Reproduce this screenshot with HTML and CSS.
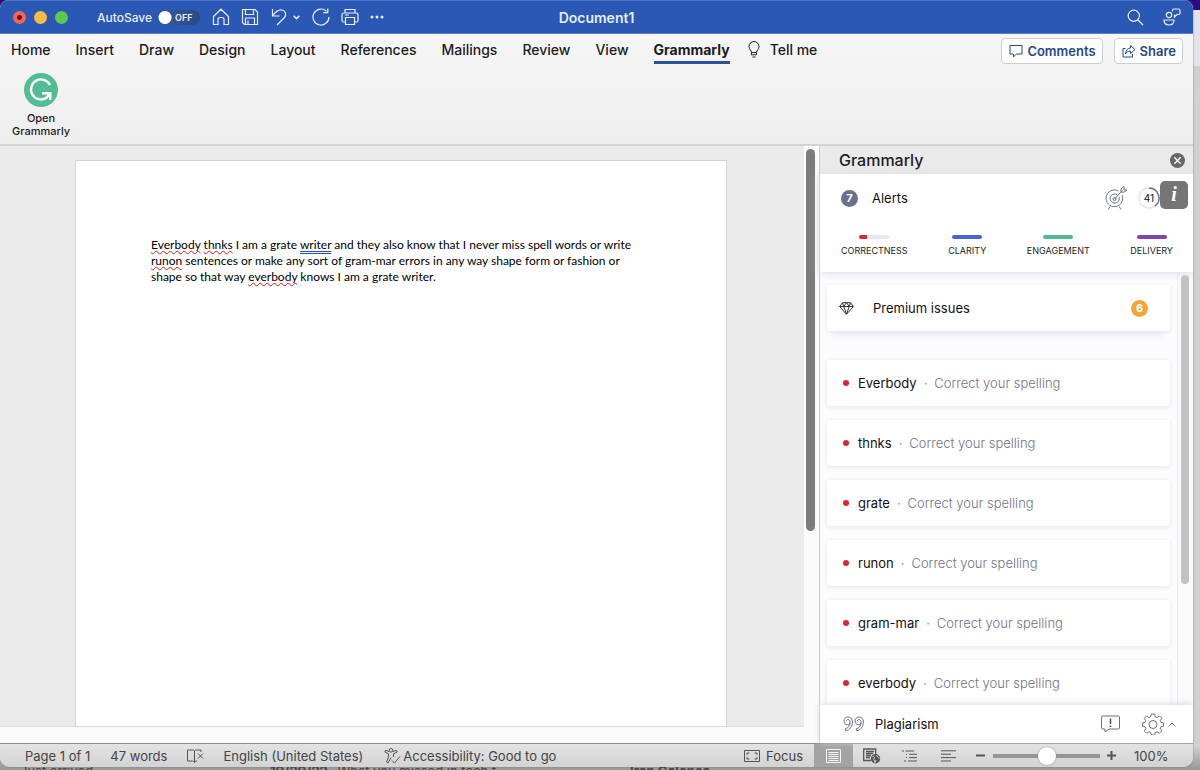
FILE: index.html
```html
<!DOCTYPE html>
<html lang="en">
<head>
<meta charset="utf-8">
<title>Document1</title>
<link rel="stylesheet" href="styles.css">
</head>
<body>
<div class="window">
  <header class="titlebar">
    <div class="lights">
      <button class="light light-close" aria-label="Close window"></button>
      <button class="light light-min" aria-label="Minimize"></button>
      <button class="light light-max" aria-label="Zoom"></button>
    </div>
    <label class="autosave" for="autosave">AutoSave
      <span class="switch"><input type="checkbox" id="autosave"><span class="switch-text">OFF</span></span>
    </label>
    <div class="quick">
      <button class="icon-btn" aria-label="Home"><svg width="18" height="18" viewBox="0 0 18 18"><path d="M1.500 8.500 9 1.200l7.500 7.300V16.500h-4.500v-5.500c0-2-6-2-6 0v5.500H1.500z"/></svg></button>
      <button class="icon-btn" aria-label="Save"><svg width="18" height="18" viewBox="0 0 18 18"><path d="M1.500 1.500h12.500l2.500 2.500v12.500h-13l-2-2zM4.500 1.500v5h8v-5M4.500 16.500v-6.500h9v6.500M7 12.500v4"/></svg></button>
      <button class="icon-btn undo" aria-label="Undo"><svg width="17" height="18" viewBox="0 0 17 18"><path d="M2.500 1v7h7M2.500 8C6 3 9 1.500 12 2c4 .8 4.500 5 2.500 7.500L7 17"/></svg><svg class="caret" width="7" height="5" viewBox="0 0 7 5"><path d="m.7.700 2.800 3L6.300.700"/></svg></button>
      <button class="icon-btn" aria-label="Redo"><svg width="19" height="18" viewBox="0 0 19 18"><path d="M15.500 3.200A8 8 0 1 0 18 9M16.800.500v4.200h-4.500"/></svg></button>
      <button class="icon-btn" aria-label="Print"><svg width="18" height="18" viewBox="0 0 18 18"><path d="M4 5V1.500h10V5M4 14H2.500c-1 0-1.500-.5-1.500-1.500V7c0-1 .7-2 2-2h12c1.300 0 2 1 2 2v5.500c0 1-.5 1.500-1.500 1.500H14M4.500 9.500h9v7h-9zM4 7h4"/></svg></button>
      <button class="icon-btn" aria-label="More"><svg width="14" height="4" viewBox="0 0 14 4"><g fill="#e8eefb" stroke="none"><circle cx="2" cy="2" r="1.500"/><circle cx="7" cy="2" r="1.500"/><circle cx="12" cy="2" r="1.500"/></g></svg></button>
    </div>
    <h1 class="doc-title">Document1</h1>
    <div class="title-tools">
      <button class="icon-btn" aria-label="Search"><svg width="17" height="17" viewBox="0 0 17 17"><circle cx="6.800" cy="6.800" r="5.600"/><path d="m11 11 5 5"/></svg></button>
      <button class="icon-btn" aria-label="Collaborate"><svg width="18" height="18" viewBox="0 0 18 18"><circle cx="6" cy="7" r="2.700"/><path d="M1 12h10c0 3.200-2 5-5 5s-5-1.800-5-5zM9.500 3.500V2.500c0-1 .5-1.500 1.500-1.500h4.500c1 0 1.500.500 1.500 1.500v2.500c0 1-.5 1.500-1.500 1.500H14l-2.500 2.500V6.500"/></svg></button>
    </div>
  </header>

  <section class="ribbon">
    <div class="tabs-row">
      <nav class="tabs">
        <button class="tab">Home</button>
        <button class="tab">Insert</button>
        <button class="tab">Draw</button>
        <button class="tab">Design</button>
        <button class="tab">Layout</button>
        <button class="tab">References</button>
        <button class="tab">Mailings</button>
        <button class="tab">Review</button>
        <button class="tab">View</button>
        <button class="tab tab-active">Grammarly</button>
      </nav>
      <button class="tab tell"><svg width="12" height="17" viewBox="0 0 12 17"><path d="M3.500 11.500C3.500 9.500 1 8.500 1 5.500a5 5 0 0 1 10 0c0 3-2.500 4-2.500 6zM3.500 13.800h5M4.500 16h3M3.500 11.500v2.300m5-2.300v2.300"/></svg>Tell me</button>
      <div class="actions">
        <button class="action"><svg width="14" height="14" viewBox="0 0 14 14"><path d="M1 1.500h12v8.500H7.500L4.500 13v-3H1z"/></svg>Comments</button>
        <button class="action"><svg width="14" height="14" viewBox="0 0 14 14"><path d="M3.500 4.500H1v8.500h9.500v-3M8.500 1.500l4.500 4-4.500 4V7C6 7 4.500 8 3.500 10 3.700 6.500 5.500 4.200 8.500 4z"/></svg>Share</button>
      </div>
    </div>
    <button class="open-grammarly">
      <svg width="34" height="34" viewBox="0 0 34 34" fill="none" stroke="#fff" stroke-width="2.400"><circle cx="17" cy="17" r="17" fill="#52bd95" stroke="none"/><path d="M26 12A10 10 0 1 0 22.500 24.800L26 20.500"/><path d="M18 20.300h8.300v6.700"/></svg>
      <span>Open<br>Grammarly</span>
    </button>
  </section>

  <main class="workspace">
    <section class="editor">
      <div class="canvas">
        <article class="page">
          <p><span class="misspelt">Everbody</span> <span class="misspelt">thnks</span> I am a grate <span class="grammar">writer</span> and they also know that I never miss spell words or write <span class="misspelt">runon</span> sentences or make any sort of gram-mar errors in any way shape form or fashion or shape so that way <span class="misspelt">everbody</span> knows I am a grate writer.</p>
        </article>
      </div>
      <div class="editor-scroll"><div class="editor-thumb"></div></div>
    </section>

    <aside class="pane">
      <header class="pane-head">
        <h2>Grammarly</h2>
        <button class="pane-close" aria-label="Close pane"><svg width="15" height="15" viewBox="0 0 15 15"><circle cx="7.500" cy="7.500" r="7.500" fill="#666"/><path d="m4.300 4.300 6.400 6.400m0-6.400-6.400 6.400" stroke="#fff" stroke-width="1.400"/></svg></button>
      </header>
      <section class="summary">
        <div class="alerts">
          <span class="count">7</span><span class="alerts-label">Alerts</span>
          <button class="goal" aria-label="Goals"><svg width="22" height="24" viewBox="0 0 22 24" fill="none" stroke="#6a7087" stroke-width="1"><path d="M13.300 5A8.300 8.300 0 1 0 17 9"/><path d="M12 8.500a4.600 4.600 0 1 0 2 2.300"/><circle cx="9.500" cy="13" r="1.500"/><path d="m9.500 13 8-8.500M16 6V3l3-2.500V4h3L19 6.200zM5 20.500l-2 3m11-3 2 3"/></svg></button>
          <span class="score"><svg width="22" height="22" viewBox="0 0 22 22"><circle cx="11" cy="11" r="10" fill="none" stroke="#e2e3ec" stroke-width="1.300"/><path d="M11 1a10 10 0 0 1 5.700 18.200" fill="none" stroke="#6a7087" stroke-width="1.400"/></svg><span>41</span></span>
          <button class="info" aria-label="Information">i</button>
        </div>
        <ul class="metrics">
          <li><span class="bar bar-red"></span>CORRECTNESS</li>
          <li><span class="bar bar-blue"></span>CLARITY</li>
          <li><span class="bar bar-green"></span>ENGAGEMENT</li>
          <li><span class="bar bar-purple"></span>DELIVERY</li>
        </ul>
      </section>
      <div class="list-wrap">
        <div class="list">
          <button class="card premium"><svg width="15" height="13" viewBox="0 0 15 13" fill="none" stroke="#333" stroke-width="1"><path d="M3.500.700h8L14.400 4.500 7.500 12.300.600 4.500zM.600 4.500h13.800M3.500.700l1.200 3.800 2.800 7.500 2.800-7.500 1.200-3.800M4.700 4.500 7.500.700l2.800 3.800"/></svg><span>Premium issues</span><span class="premium-count">6</span></button>
          <button class="card"><i class="dot"></i><span>Everbody</span><span class="hint">·</span><span class="hint">Correct your spelling</span></button>
          <button class="card"><i class="dot"></i><span>thnks</span><span class="hint">·</span><span class="hint">Correct your spelling</span></button>
          <button class="card"><i class="dot"></i><span>grate</span><span class="hint">·</span><span class="hint">Correct your spelling</span></button>
          <button class="card"><i class="dot"></i><span>runon</span><span class="hint">·</span><span class="hint">Correct your spelling</span></button>
          <button class="card"><i class="dot"></i><span>gram-mar</span><span class="hint">·</span><span class="hint">Correct your spelling</span></button>
          <button class="card"><i class="dot"></i><span>everbody</span><span class="hint">·</span><span class="hint">Correct your spelling</span></button>
        </div>
        <div class="list-scroll"><div class="list-thumb"></div></div>
      </div>
      <footer class="pane-foot">
        <button class="plagiarism"><svg width="21" height="16" viewBox="0 0 21 16" fill="none" stroke="#6a7087"><path id="q" d="M7 6.500C7 8 6 8.800 4.700 8.800 2.500 8.800 1 7 1 4.900 1 2.700 2.700 1 5 1c2.700 0 4.400 2 4.400 5 0 4.500-2.700 7.800-6.600 8.800l-.6-1.900C5 12 7 10 7 6.500 7 4.500 6.200 3.500 5 3.500c-.9 0-1.500.6-1.500 1.500"/><use href="#q" x="11"/></svg>Plagiarism</button>
        <button class="feedback" aria-label="Feedback"><svg width="19" height="18" viewBox="0 0 19 18" fill="none" stroke="#6a7087"><path d="M1.500 1h16c.5 0 1 .5 1 1v11c0 .5-.5 1-1 1H8l-4 3v-3H1.500c-.5 0-1-.5-1-1V2c0-.5.500-1 1-1z"/><path d="M9.500 3.500V9m0 1.500V12" stroke="#444b63" stroke-width="1.500"/></svg></button>
        <button class="settings" aria-label="Settings"><svg width="22" height="22" viewBox="0 0 22 22" fill="none" stroke="#6a7087"><path d="M9.300 1h3.400l.5 2.700 1.900.8 2.300-1.600 2.400 2.400-1.500 2.300.7 1.800 2.500.5v3.300l-2.500.5-.8 1.900 1.600 2.300-2.400 2.400-2.300-1.600-1.900.8-.5 2.500H9.300l-.5-2.500-1.900-.8-2.300 1.600-2.400-2.400 1.600-2.300-.8-1.900-2.500-.5V9.900L3 9.400l.8-1.800-1.600-2.300 2.400-2.400 2.300 1.600 1.900-.8z"/><circle cx="11" cy="11.500" r="4"/></svg><svg width="8" height="5" viewBox="0 0 8 5" fill="none" stroke="#6a7087"><path d="m.5 4.500 3.500-3.500 3.500 3.500"/></svg></button>
      </footer>
    </aside>
  </main>

  <footer class="status">
    <button class="page-num">Page 1 of 1</button>
    <button class="words">47 words</button>
    <button class="proof" aria-label="Proofing"><svg width="17" height="14" viewBox="0 0 17 14" fill="none" stroke="#555"><path d="M7.500 2v11.500C7 12.500 6 12 5 12H.5V1H5c1.300 0 2 .3 2.500 1 .5-.7 1.200-1 2.500-1h4v2M7.500 13.500c.5-1 1-1.500 2.500-1.500M11 4.500l5 5m0-5-5 5"/></svg></button>
    <button class="lang">English (United States)</button>
    <button class="access"><svg width="17" height="16" viewBox="0 0 17 16" fill="none" stroke="#555"><circle cx="7" cy="2.300" r="1.800"/><path d="M5.200 3.500 1.500 2.300.8 4 4.500 5.800v3L2.500 14l1.700.8L7 9.500M8.800 3.500l3.700-1.200.7 1.700-3.700 1.800V9M8 12.500l2.500 2.500L16 8.500"/></svg>Accessibility: Good to go</button>
    <button class="focus"><svg width="16" height="12" viewBox="0 0 16 12" fill="none" stroke="#555"><path d="M.5.500h15v11H.5zM3 5V3h2.500M10.500 3H13v2M3 7v2h2.500M10.500 9H13V7"/></svg>Focus</button>
    <div class="views">
      <button class="view view-active" aria-label="Print layout"><svg width="15" height="14" viewBox="0 0 15 14" fill="none" stroke="#f4f4f4"><path d="M.5.500h14v13H.5zM2.500 3.500h10m-10 2h10m-10 2h10m-10 2h10m-10 2h10"/></svg></button>
      <button class="view" aria-label="Web layout"><svg width="18" height="16" viewBox="0 0 18 16" fill="none" stroke="#555"><path d="M8 12.500H.7V1h12v5M3 3.500h8M3 5.500h7M3 7.500h5M3 9.500h4" stroke-width="1.300"/><circle cx="12.500" cy="10.800" r="4.700" fill="#555" stroke="none"/><path d="M9.500 8.500c1 0 2.500.5 2 1.500s-1 .5-.5 2 .5 1.500 1 2.500l1-2.500M14 7c-.5 1 0 1.500 1 2s.500 1.500 1.500 1.500" stroke="#d8d8d8"/></svg></button>
      <button class="view" aria-label="Outline"><svg width="16" height="12" viewBox="0 0 16 12" fill="none" stroke="#555"><path d="M0 1h2m1.500 0H12M4 4.300h1m2 0h8M4 7.600h1m2 0h8M2 11h2m2 0h9"/></svg></button>
      <button class="view" aria-label="Draft"><svg width="15" height="12" viewBox="0 0 15 12" fill="none" stroke="#555"><path d="M0 .800h15M0 4.200h10M0 7.600h15M0 11h10"/></svg></button>
    </div>
    <div class="zoom">
      <button class="sign" aria-label="Zoom out"><svg width="9" height="9" viewBox="0 0 9 9"><path d="M0 4.500h9" stroke="#555" stroke-width="2"/></svg></button>
      <input type="range" aria-label="Zoom" min="0" max="100" value="50">
      <button class="sign" aria-label="Zoom in"><svg width="9" height="9" viewBox="0 0 9 9"><path d="M0 4.500h9M4.500 0v9" stroke="#555" stroke-width="2"/></svg></button>
      <button class="percent">100%</button>
    </div>
  </footer>
</div>
<div class="behind">
  <span class="behind-arrived">Just arrived</span>
  <span class="behind-mail"><b>10/20/22</b> What you missed in tech t</span>
  <b>Iron Colones</b>
</div>
</body>
</html>
```

FILE: styles.css
```css
* { box-sizing: border-box; }

body {
  margin: 0;
  height: 100vh;
  display: flex;
  flex-direction: column;
  background: linear-gradient(#2c0c80 0 10px, #e3e3e8 10px 66px, #d0d0d0 66px calc(100% - 24px), #9b9b9b calc(100% - 2px));
  font-family: Inter, "Liberation Sans", sans-serif;
  color: #1c1c1c;
  overflow: hidden;
}

button {
  border: 0;
  padding: 0;
  background: none;
  font: inherit;
  color: inherit;
  display: flex;
  align-items: center;
}

h1, h2, p, ul { margin: 0; padding: 0; }
svg { display: block; flex: none; }

.window {
  flex: 1;
  min-height: 0;
  margin-right: 7px;
  display: flex;
  flex-direction: column;
  border-radius: 9px 9px 10px 10px;
  overflow: hidden;
  background: #f5f5f5;
  box-shadow: 0 0 2px #777;
}

/* Mail window that peeks out under this one */
.behind {
  flex: none;
  height: 3px;
  display: flex;
  padding-left: 20px;
  overflow: hidden;
  white-space: nowrap;
  font-size: 13px;
  line-height: 9px;
  color: #444;
}
.behind-arrived { width: 250px; }
.behind-mail { width: 360px; }
.behind-mail b { margin-right: 6px; }

/* Title bar */
.titlebar {
  position: relative;
  flex: none;
  height: 34px;
  display: flex;
  align-items: center;
  padding: 0 12px 0 13px;
  background: #2b58b5;
  border-top: 1px solid #4e74c6;
  border-bottom: 1px solid #5b7fca;
  color: #e8eefb;
}
.lights { display: flex; gap: 8px; }
.light { width: 13px; height: 13px; border-radius: 50%; }
.light-close { background: radial-gradient(circle, #7c0c08 0 2px, #f2655b 3px); }
.light-min { background: #f6bd45; }
.light-max { background: #5dc94d; }
.autosave {
  display: flex;
  align-items: center;
  gap: 6px;
  margin-left: 29px;
  font-size: 12px;
  font-weight: 500;
}
.switch { display: grid; align-items: center; width: 42px; }
.switch > * { grid-area: 1 / 1; }
.switch input {
  appearance: none;
  margin: 0;
  width: 42px;
  height: 15px;
  border-radius: 8px;
  background: radial-gradient(circle at 7px 50%, #fff 0 6px, transparent 7px), linear-gradient(90deg, #3b5b96, #2b4887);
}
.switch-text { position: relative; padding-left: 17px; font-size: 9px; font-weight: 600; pointer-events: none; }
.quick { display: flex; align-items: center; gap: 11px; margin-left: 12px; }
.icon-btn svg { fill: none; stroke: #e8eefb; stroke-width: 1.2; }
.icon-btn { min-height: 20px; }
.undo { gap: 6px; }
.undo .caret { stroke-width: 1.6; }
.doc-title {
  position: absolute;
  left: 0;
  right: 0;
  text-align: center;
  font-size: 14px;
  font-weight: 600;
  pointer-events: none;
}
.title-tools { display: flex; gap: 19px; margin-left: auto; }

/* Ribbon */
.ribbon {
  flex: none;
  height: 112px;
  background: linear-gradient(#f7f6f6, #eeeeee);
  border-bottom: 2px solid #d4d4d4;
}
.tabs-row { display: flex; align-items: center; height: 34px; padding: 0 10px 0 11px; }
.tabs { display: flex; gap: 25px; }
.tab { font-size: 14px; line-height: 20px; font-weight: 500; height: 26px; border-bottom: 3px solid transparent; white-space: nowrap; }
.tab-active { font-weight: 700; border-bottom-color: #2b5299; }
.tell { gap: 10px; margin-left: 18px; }
.tell svg { fill: none; stroke: #222; }
.actions { display: flex; gap: 11px; margin-left: auto; }
.action {
  height: 26px;
  gap: 4px;
  padding: 0 6px 0 7px;
  border: 1px solid #cfcfcf;
  border-radius: 4px;
  background: #fff;
  color: #264a85;
  font-size: 13px;
  font-weight: 600;
}
.action svg { fill: none; stroke: #264a85; }
.open-grammarly {
  flex-direction: column;
  gap: 5px;
  margin: 5px 0 0 12px;
  font-size: 11px;
  line-height: 13px;
  font-weight: 500;
  text-align: center;
}

/* Document */
.workspace { flex: 1; min-height: 0; display: flex; }
.editor { flex: 1; min-width: 0; display: flex; background: #fafafa; }
.canvas {
  flex: 1;
  margin-bottom: 16px;
  padding: 14px 77px 0 75px;
  background: #ebebeb;
  border-bottom: 1px solid #ddd;
  overflow: hidden;
  display: flex;
}
.page {
  flex: 1;
  padding: 76px 90px 0 75px;
  background: #fff;
  border: 1px solid #d2d2d2;
  border-bottom: 0;
  font-family: Lato, "Liberation Sans", sans-serif;
  font-size: 12px;
  line-height: 16px;
  color: #000;
}
.misspelt { text-decoration: underline wavy #e01818 1px; text-underline-offset: 1px; text-decoration-skip-ink: none; }
.grammar { text-decoration: underline double #1f4fc0 1px; text-underline-offset: 2px; text-decoration-skip-ink: none; }
.editor-scroll { width: 15px; padding: 3px 3px 0 2px; }
.editor-thumb { height: 382px; width: 9px; border-radius: 5px; background: #7c7c7c; }

/* Grammarly pane */
.pane {
  width: 374px;
  flex: none;
  display: flex;
  flex-direction: column;
  border-left: 1px solid #c9c9c9;
  background: #fff;
}
.pane-head {
  flex: none;
  height: 28px;
  display: flex;
  align-items: center;
  justify-content: space-between;
  padding: 0 8px 0 19px;
  background: #eaeaea;
}
.pane-head h2 { font-size: 16px; font-weight: 500; }
.summary { position: relative; flex: none; height: 98px; box-shadow: 0 1px 8px #d9dae6; }
.alerts { display: flex; align-items: center; height: 48px; padding: 0 5px 0 21px; font-size: 13px; color: #111; }
.count, .premium-count {
  width: 17px;
  height: 17px;
  border-radius: 50%;
  background: #6a7190;
  color: #fff;
  font-size: 11px;
  line-height: 17px;
  font-weight: 700;
  text-align: center;
}
.alerts-label { margin-left: 14px; }
.goal { margin-left: auto; }
.score { display: grid; place-items: center; margin-left: 11px; font-size: 10px; }
.score > * { grid-area: 1 / 1; }
.info {
  justify-content: center;
  width: 28px;
  height: 28px;
  margin-bottom: 7px;
  border-radius: 5px;
  background: #757575;
  color: #fff;
  font: italic bold 20px "Liberation Serif", serif;
}
.metrics { display: flex; justify-content: space-between; padding: 13px 20px 0 21px; list-style: none; }
.metrics li { font-size: 9px; line-height: 12px; display: flex; flex-direction: column; align-items: center; gap: 6px; }
.bar { width: 30px; height: 4px; border-radius: 2px; }
.bar-red { background: linear-gradient(90deg, #d62839 0 8px, #e6e7ef 8px); }
.bar-blue { background: #4a63d8; }
.bar-green { background: #52b893; }
.bar-purple { background: #7d42b8; }

.list-wrap { flex: 1; min-height: 0; display: flex; overflow: hidden; background: #fcfcfe; }
.list { flex: 1; display: flex; flex-direction: column; gap: 14px; padding: 13px 7px 0 7px; }
.card {
  flex: none;
  width: 100%;
  height: 46px;
  padding: 0 22px 0 16px;
  border-radius: 3px;
  background: #fff;
  box-shadow: 0 1px 4px #e2e3ec;
  font-size: 13px;
  color: #111;
}
.premium { padding-left: 12px; margin-bottom: 15px; box-shadow: 0 1px 4px #e2e3ec, 0 12px 6px -6px #f2f3f9; }
.premium span:first-of-type { margin-left: 19px; }
.premium-count { margin-left: auto; background: #f2a63a; }
.dot { width: 6px; height: 6px; margin-right: 9px; border-radius: 50%; background: #dc2438; }
.hint { margin-left: 7px; color: #71747f; font-weight: 300; }
.list-scroll { width: 16px; padding: 3px 4px 0 3px; border-left: 1px solid #e9e9ec; background: #fafafa; }
.list-thumb { height: 309px; border-radius: 4px; background: #c1c1c3; }

.pane-foot {
  position: relative;
  flex: none;
  height: 38px;
  display: flex;
  align-items: center;
  padding: 0 17px 0 23px;
  background: #fff;
  box-shadow: 0 -1px 7px #d9dae6;
}
.plagiarism { gap: 11px; font-size: 13px; color: #111; }
.feedback { margin-left: auto; }
.settings { gap: 4px; margin-left: 22px; }

/* Status bar */
.status {
  flex: none;
  height: 24px;
  display: flex;
  align-items: center;
  padding-left: 25px;
  border-top: 1px solid #8d8d8d;
  background: linear-gradient(#e3e3e3, #d3d3d3);
  color: #444;
  font-size: 13px;
  white-space: nowrap;
}
.words { margin-left: 20px; }
.proof { margin-left: 20px; }
.lang { margin-left: 19px; }
.access { margin-left: 21px; gap: 2px; }
.focus { margin-left: auto; gap: 6px; }
.views { display: flex; align-self: stretch; margin-left: 11px; }
.view { width: 38px; justify-content: center; }
.view-active { width: 39px; background: #a3a3a3; }
.zoom { display: flex; align-items: center; margin-left: 9px; }
.zoom input {
  appearance: none;
  width: 107px;
  height: 18px;
  margin: 0 7px 0 8px;
  background: linear-gradient(#969696, #969696) center / 100% 4px no-repeat;
}
.zoom input::-webkit-slider-thumb { appearance: none; width: 18px; height: 18px; border-radius: 50%; background: #fff; box-shadow: 0 0 2px #888; }
.percent { width: 59px; margin-left: 18px; }
```
